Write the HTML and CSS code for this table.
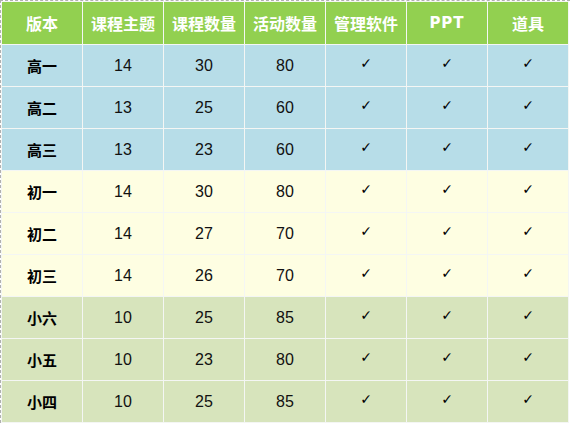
FILE: index.html
```html
<!DOCTYPE html>
<html>
<head>
<meta charset="utf-8">
<link rel="stylesheet" href="styles.css">
</head>
<body>
<div class="frame">
<table class="grid">
<thead>
<tr><th>版本</th><th>课程主题</th><th>课程数量</th><th>活动数量</th><th>管理软件</th><th class="latin">PPT</th><th>道具</th></tr>
</thead>
<tbody>
<tr class="blue"><td class="name">高一</td><td>14</td><td>30</td><td>80</td><td class="ck">✓</td><td class="ck">✓</td><td class="ck">✓</td></tr>
<tr class="blue"><td class="name">高二</td><td>13</td><td>25</td><td>60</td><td class="ck">✓</td><td class="ck">✓</td><td class="ck">✓</td></tr>
<tr class="blue"><td class="name">高三</td><td>13</td><td>23</td><td>60</td><td class="ck">✓</td><td class="ck">✓</td><td class="ck">✓</td></tr>
<tr class="cream"><td class="name">初一</td><td>14</td><td>30</td><td>80</td><td class="ck">✓</td><td class="ck">✓</td><td class="ck">✓</td></tr>
<tr class="cream"><td class="name">初二</td><td>14</td><td>27</td><td>70</td><td class="ck">✓</td><td class="ck">✓</td><td class="ck">✓</td></tr>
<tr class="cream"><td class="name">初三</td><td>14</td><td>26</td><td>70</td><td class="ck">✓</td><td class="ck">✓</td><td class="ck">✓</td></tr>
<tr class="olive"><td class="name">小六</td><td>10</td><td>25</td><td>85</td><td class="ck">✓</td><td class="ck">✓</td><td class="ck">✓</td></tr>
<tr class="olive"><td class="name">小五</td><td>10</td><td>23</td><td>80</td><td class="ck">✓</td><td class="ck">✓</td><td class="ck">✓</td></tr>
<tr class="olive"><td class="name">小四</td><td>10</td><td>25</td><td>85</td><td class="ck">✓</td><td class="ck">✓</td><td class="ck">✓</td></tr>
</tbody>
</table>
</div>
</body>
</html>
```
FILE: styles.css
```css
html, body {
  margin: 0;
  padding: 0;
  background: #ffffff;
}
.frame {
  width: 569px;
  border-top: 1px dashed #b0b0b0;
  border-left: 1px dashed #b0b0b0;
}
.grid {
  width: 568px;
  border-collapse: collapse;
  table-layout: fixed;
  font-family: "Liberation Sans", "Noto Sans CJK SC", sans-serif;
}
.grid th, .grid td {
  border: 1px solid #f4f6f4;
  text-align: center;
  vertical-align: middle;
  padding: 0;
}
.grid th {
  height: 42px;
  background: #92d050;
  color: #ffffff;
  font-family: "Noto Sans CJK SC", sans-serif;
  font-weight: bold;
  font-size: 16px;
}
.grid th.latin {
  font-family: "DejaVu Sans", sans-serif;
  font-size: 15px;
  letter-spacing: 1px;
}
.grid td {
  height: 41px;
  line-height: 18px;
  font-size: 16px;
  color: #111111;
}
.grid td.name {
  font-family: "Noto Sans CJK SC", sans-serif;
  font-weight: bold;
  font-size: 15px;
  color: #000000;
}
.grid td.ck {
  font-family: "DejaVu Sans", sans-serif;
  font-size: 14px;
  font-weight: bold;
  color: #000000;
  height: 36px;
  line-height: 14px;
  padding-bottom: 5px;
}
.blue td { background: #b7dde8; }
.cream td { background: #fefee2; }
.olive td { background: #d7e4bc; }
```
